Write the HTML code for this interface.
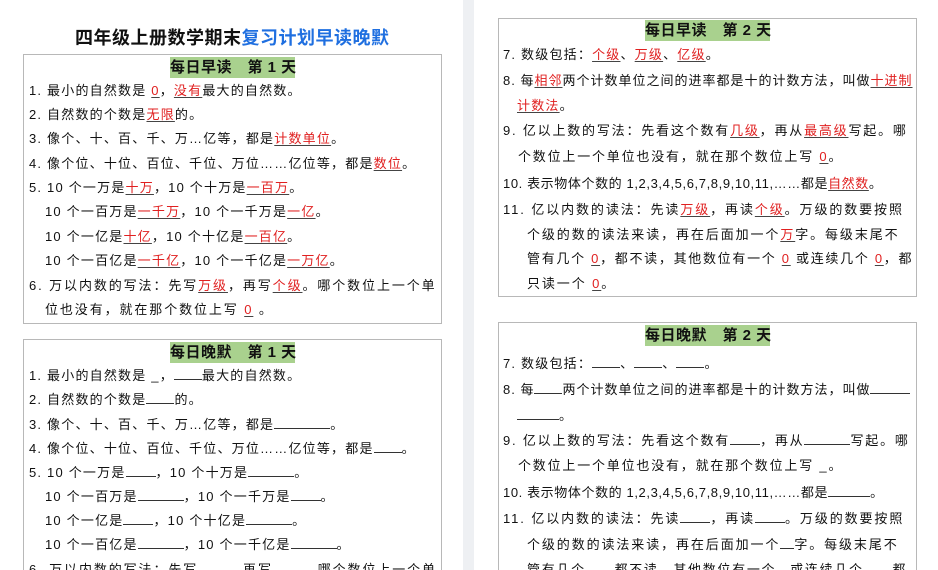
<!DOCTYPE html>
<html><head><meta charset="utf-8"><style>
*{margin:0;padding:0;box-sizing:border-box}
html,body{width:938px;height:570px;overflow:hidden}
body{background:#fff;position:relative;font-family:"Liberation Sans","Noto Sans CJK SC",sans-serif;color:#111}
.gap{position:absolute;left:463px;top:0;width:11px;height:570px;background:#eef0f3}
.box{position:absolute;border:1.5px solid #b8b8b8;background:#fff}
.hd{position:absolute;background:#a9d18e;font-weight:bold;font-size:15px;line-height:21px;text-align:center;white-space:nowrap;letter-spacing:0.5px}
.l{position:absolute;font-size:13px;line-height:16px;white-space:nowrap;letter-spacing:1.2px}
.r{color:#e02020;text-decoration:underline;text-decoration-color:#444;text-underline-offset:2px}
.b{display:inline-block;border-bottom:1px solid #333;height:12px;vertical-align:baseline}
.t{position:absolute;left:75px;top:24px;font-weight:bold;font-size:18px;white-space:nowrap;letter-spacing:0.5px}
</style></head><body>
<div class="gap"></div>
<div class="t">四年级上册数学期末<span style="color:#1f6fe0">复习计划早读晚默</span></div>

<div class="box" style="left:23px;top:54px;width:419px;height:270px"></div>
<div class="hd" style="left:170px;top:57px;width:125px">每日早读　第 1 天</div>
<div class="l" style="left:29px;top:83px">1. 最小的自然数是 <span class="r">0</span>，<span class="r">没有</span>最大的自然数。</div>
<div class="l" style="left:29px;top:107px">2. 自然数的个数是<span class="r">无限</span>的。</div>
<div class="l" style="left:29px;top:131px">3. 像个、十、百、千、万…亿等，都是<span class="r">计数单位</span>。</div>
<div class="l" style="left:29px;top:156px">4. 像个位、十位、百位、千位、万位……亿位等，都是<span class="r">数位</span>。</div>
<div class="l" style="left:29px;top:180px">5. 10 个一万是<span class="r">十万</span>，10 个十万是<span class="r">一百万</span>。</div>
<div class="l" style="left:45px;top:204px">10 个一百万是<span class="r">一千万</span>，10 个一千万是<span class="r">一亿</span>。</div>
<div class="l" style="left:45px;top:229px">10 个一亿是<span class="r">十亿</span>，10 个十亿是<span class="r">一百亿</span>。</div>
<div class="l" style="left:45px;top:253px">10 个一百亿是<span class="r">一千亿</span>，10 个一千亿是<span class="r">一万亿</span>。</div>
<div class="l" style="left:29px;top:278px;letter-spacing:1.9px">6. 万以内数的写法：先写<span class="r">万级</span>，再写<span class="r">个级</span>。哪个数位上一个单</div>
<div class="l" style="left:45px;top:302px;letter-spacing:1.9px">位也没有，就在那个数位上写 <span class="r">0</span> 。</div>

<div class="box" style="left:23px;top:339px;width:419px;height:240px"></div>
<div class="hd" style="left:170px;top:342px;width:125px">每日晚默　第 1 天</div>
<div class="l" style="left:29px;top:368px">1. 最小的自然数是 _，<span class="b" style="width:28px"></span>最大的自然数。</div>
<div class="l" style="left:29px;top:392px">2. 自然数的个数是<span class="b" style="width:28px"></span>的。</div>
<div class="l" style="left:29px;top:417px">3. 像个、十、百、千、万…亿等，都是<span class="b" style="width:56px"></span>。</div>
<div class="l" style="left:29px;top:441px">4. 像个位、十位、百位、千位、万位……亿位等，都是<span class="b" style="width:28px"></span>。</div>
<div class="l" style="left:29px;top:465px">5. 10 个一万是<span class="b" style="width:30px"></span>，10 个十万是<span class="b" style="width:46px"></span>。</div>
<div class="l" style="left:45px;top:489px">10 个一百万是<span class="b" style="width:46px"></span>，10 个一千万是<span class="b" style="width:30px"></span>。</div>
<div class="l" style="left:45px;top:513px">10 个一亿是<span class="b" style="width:30px"></span>，10 个十亿是<span class="b" style="width:46px"></span>。</div>
<div class="l" style="left:45px;top:537px">10 个一百亿是<span class="b" style="width:46px"></span>，10 个一千亿是<span class="b" style="width:46px"></span>。</div>
<div class="l" style="left:29px;top:562px;letter-spacing:1.9px">6. 万以内数的写法：先写<span class="b" style="width:30px"></span>，再写<span class="b" style="width:30px"></span>。哪个数位上一个单</div>

<div class="box" style="left:498px;top:18px;width:419px;height:279px"></div>
<div class="hd" style="left:645px;top:20px;width:125px">每日早读　第 2 天</div>
<div class="l" style="left:503px;top:47px">7. 数级包括：<span class="r">个级</span>、<span class="r">万级</span>、<span class="r">亿级</span>。</div>
<div class="l" style="left:503px;top:73px;letter-spacing:1px">8. 每<span class="r">相邻</span>两个计数单位之间的进率都是十的计数方法，叫做<span class="r">十进制</span></div>
<div class="l" style="left:517px;top:98px"><span class="r">计数法</span>。</div>
<div class="l" style="left:503px;top:123px;letter-spacing:1.8px">9. 亿以上数的写法：先看这个数有<span class="r">几级</span>，再从<span class="r">最高级</span>写起。哪</div>
<div class="l" style="left:518px;top:149px;letter-spacing:1.8px">个数位上一个单位也没有，就在那个数位上写 <span class="r">0</span>。</div>
<div class="l" style="left:503px;top:176px;letter-spacing:0.6px">10. 表示物体个数的 1,2,3,4,5,6,7,8,9,10,11,……都是<span class="r">自然数</span>。</div>
<div class="l" style="left:503px;top:202px;letter-spacing:1.9px">11. 亿以内数的读法：先读<span class="r">万级</span>，再读<span class="r">个级</span>。万级的数要按照</div>
<div class="l" style="left:527px;top:227px;letter-spacing:1.9px">个级的数的读法来读，再在后面加一个<span class="r">万</span>字。每级末尾不</div>
<div class="l" style="left:527px;top:251px;letter-spacing:1.7px">管有几个 <span class="r">0</span>，都不读，其他数位有一个 <span class="r">0</span> 或连续几个 <span class="r">0</span>，都</div>
<div class="l" style="left:527px;top:276px;letter-spacing:1.9px">只读一个 <span class="r">0</span>。</div>

<div class="box" style="left:498px;top:322px;width:419px;height:260px"></div>
<div class="hd" style="left:645px;top:325px;width:125px">每日晚默　第 2 天</div>
<div class="l" style="left:503px;top:356px">7. 数级包括：<span class="b" style="width:28px"></span>、<span class="b" style="width:28px"></span>、<span class="b" style="width:28px"></span>。</div>
<div class="l" style="left:503px;top:382px;letter-spacing:1px">8. 每<span class="b" style="width:28px"></span>两个计数单位之间的进率都是十的计数方法，叫做<span class="b" style="width:40px"></span></div>
<div class="l" style="left:517px;top:408px"><span class="b" style="width:42px"></span>。</div>
<div class="l" style="left:503px;top:433px;letter-spacing:1.8px">9. 亿以上数的写法：先看这个数有<span class="b" style="width:30px"></span>，再从<span class="b" style="width:46px"></span>写起。哪</div>
<div class="l" style="left:518px;top:458px;letter-spacing:1.8px">个数位上一个单位也没有，就在那个数位上写 _。</div>
<div class="l" style="left:503px;top:485px;letter-spacing:0.6px">10. 表示物体个数的 1,2,3,4,5,6,7,8,9,10,11,……都是<span class="b" style="width:42px"></span>。</div>
<div class="l" style="left:503px;top:511px;letter-spacing:1.9px">11. 亿以内数的读法：先读<span class="b" style="width:30px"></span>，再读<span class="b" style="width:30px"></span>。万级的数要按照</div>
<div class="l" style="left:527px;top:537px;letter-spacing:1.9px">个级的数的读法来读，再在后面加一个<span class="b" style="width:14px"></span>字。每级末尾不</div>
<div class="l" style="left:527px;top:562px;letter-spacing:1.7px">管有几个<span class="b" style="width:14px"></span>，都不读，其他数位有一个<span class="b" style="width:14px"></span>或连续几个<span class="b" style="width:14px"></span>，都</div>
</body></html>
